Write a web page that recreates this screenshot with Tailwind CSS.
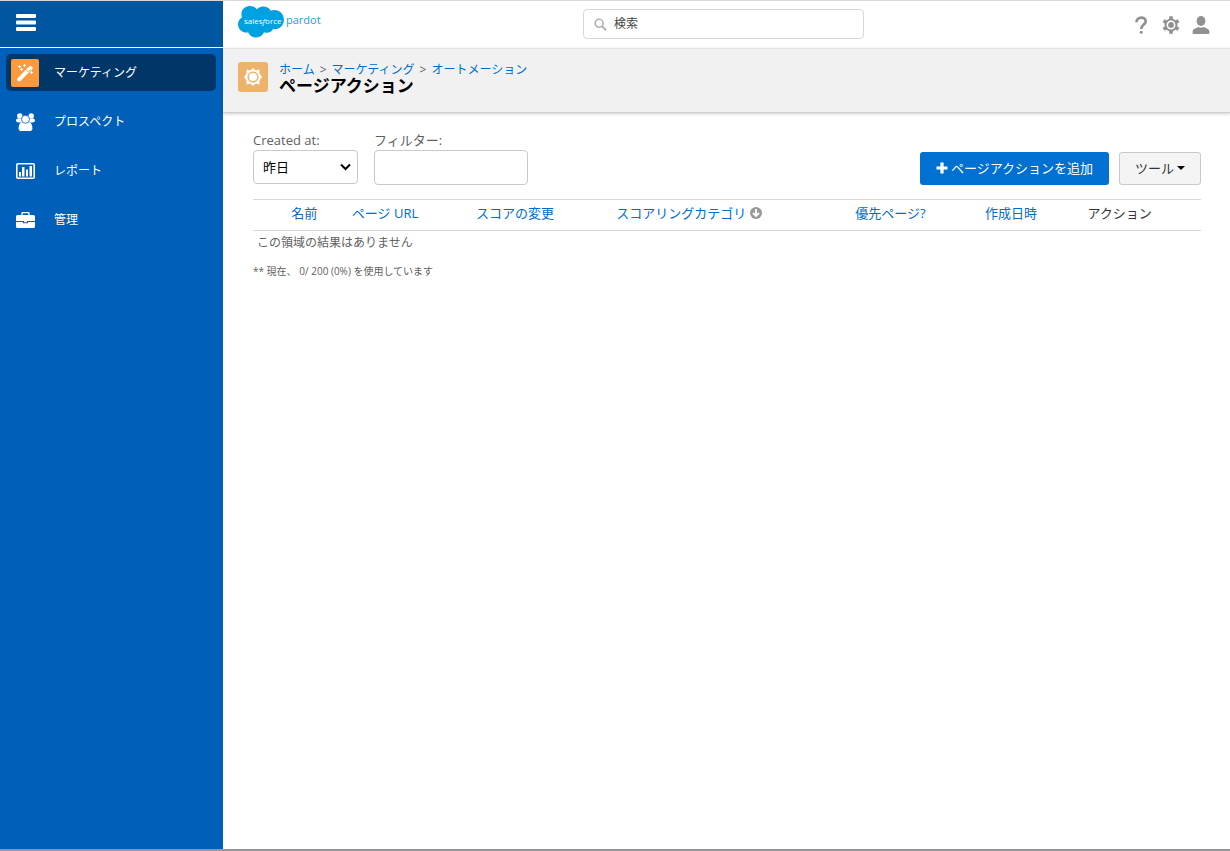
<!DOCTYPE html>
<html lang="ja">
<head>
<meta charset="utf-8">
<meta name="viewport" content="width=device-width, initial-scale=1">
<title>ページアクション</title>
<script src="https://cdn.jsdelivr.net/npm/@tailwindcss/browser@4"></script>
</head>
<body class="flex min-h-screen flex-col border-t border-[#d8d9dd] bg-white font-['Open_Sans','Noto_Sans_CJK_JP',sans-serif] text-[13px] leading-5 text-[#5f5f5f]">
<div class="flex flex-1 border-b-2 border-[#96969a]">
  <aside class="w-[223px] shrink-0 bg-[#005fb8] text-white">
    <div class="flex h-[47px] items-center border-b border-white bg-[#0056a0] pb-1 pl-4">
      <button type="button" aria-label="メニュー" class="block">
        <svg class="block h-[17px] w-5" viewBox="0 0 20 17" fill="currentColor"><rect width="20" height="4" rx="1"/><rect y="6.5" width="20" height="4" rx="1"/><rect y="13" width="20" height="4" rx="1"/></svg>
      </button>
    </div>
    <nav class="flex flex-col gap-3 px-1.5 pt-1.5 text-xs">
      <a href="#" class="flex h-[37px] w-[210px] items-center gap-[15px] rounded-[5px] bg-[#003768] pl-[5px] pr-2">
        <span class="flex size-7 items-center justify-center rounded-[2px] bg-[#ff9a3c]">
          <svg class="size-[18px]" viewBox="0 0 18 18" fill="none" stroke="white"><path d="M3.2 15.3 14.5 4" stroke-width="4" stroke-linecap="round"/><path d="m10.6 6.3 1.4 1.4 2.4-2.4" stroke="#ff9a3c" stroke-width="1"/><path d="M3.5 1v3M2 2.5h3M8.5 0v3M7 1.500h3M5.500 3.800v3M4 5.300h3M15.500 7v3M14 8.500h3" stroke-width="1"/></svg>
        </span>マーケティング</a>
      <a href="#" class="flex h-[37px] items-center gap-[19px] pl-[10px]">
        <svg class="h-[18px] w-[19px]" viewBox="0 0 19 18" fill="currentColor"><circle cx="3.8" cy="3" r="2.700"/><circle cx="15.200" cy="3" r="2.700"/><path d="M1.500 5.600h4l2 4h-5Q0 9.600 0 7.600 0 6 1.500 5.600zM17.500 5.600h-4l-2 4h5q2.500 0 2.500-2 0-1.600-1.500-2z"/><path d="M6 9h7q3.400 1.200 3.400 6.200 0 2.800-2.600 2.800H5.200q-2.600 0-2.600-2.800Q2.600 10.200 6 9z"/><circle cx="9.500" cy="6.300" r="4" stroke="#005fb8" stroke-width=".8"/></svg>
        プロスペクト</a>
      <a href="#" class="flex h-[37px] items-center gap-[19px] pl-[10px]">
        <svg class="h-4 w-[19px]" viewBox="0 0 19 16" fill="currentColor"><rect x=".8" y=".8" width="17.400" height="14.400" rx="1" fill="none" stroke="white" stroke-width="1.600"/><path d="M3 9h2v4.500H3zM6 4h2.500v9.500H6zM10 6.500h2v7h-2zM13.500 3H16v10.500h-2.500z"/></svg>
        レポート</a>
      <a href="#" class="flex h-[37px] items-center gap-[19px] pl-[10px]">
        <svg class="h-4 w-[19px]" viewBox="0 0 19 16" fill="currentColor"><path d="M6 3V1.500Q6 .5 7 .5h5q1 0 1 1V3" fill="none" stroke="white" stroke-width="1.300"/><path d="M1.500 3h16Q19 3 19 4.500V9H0V4.500Q0 3 1.500 3zM0 10h7v1.200h5V10h7v4.500q0 1.500-1.500 1.500h-16Q0 16 0 14.500z"/><path d="M8 9h3v1.300H8z"/></svg>
        管理</a>
    </nav>
  </aside>

  <div class="min-w-0 flex-1">
    <header class="relative flex h-[47px] items-center justify-between pl-[15px] pr-5">
      <a href="#" class="flex items-center gap-0.5 self-start pt-1" aria-label="salesforce pardot">
        <svg class="h-[33px] w-[84px]" viewBox="0 0 84 33"><path fill="#00a1e0" d="M19 4.200C21 2.100 23.500 1.300 26 1.600c3 .2 5.500 1.900 6.800 4.200 5.800-2.400 13.100 1.400 13.100 8.900 0 6.200-5.100 10.300-10.900 9.300-1.800 3.500-5.600 4.700-9 3.300-1.500 3.700-5 5.700-8.800 5.100-3.200-.3-5.700-2.200-6.900-5C5 28.300 0 24.500 0 19.200c0-3 1.500-5.400 3.900-6.800C1.900 6.300 6.100 1 11.500 1c3.200 0 5.800 1.200 7.500 3.200z"/><text x="6" y="19" font-family="Open Sans" font-size="8" fill="white">sales<tspan font-style="italic">f</tspan>orce</text><text x="48" y="19" font-family="Open Sans" font-size="11" fill="#159fd4">pardot</text></svg>
      </a>
      <label class="absolute left-[360px] top-2 flex h-[30px] w-[281px] items-center gap-[7px] rounded border border-[#d8d8d8] bg-white pl-2.5">
        <svg class="size-[13px] shrink-0" viewBox="0 0 14 14" fill="none" stroke="#b0b0b0" stroke-width="1.700"><circle cx="5.500" cy="5.700" r="4.300"/><path d="m8.700 8.900 4.300 4.300" stroke-width="2"/></svg>
        <input type="search" aria-label="検索" placeholder="検索" class="min-w-0 flex-1 bg-transparent text-xs outline-none placeholder:text-[#444]">
      </label>
      <div class="flex items-center gap-3 text-[#919191]">
        <button type="button" aria-label="ヘルプ"><svg class="block size-[18px]" viewBox="0 0 18 18" fill="none" stroke="currentColor" stroke-width="2.700"><path d="M4.500 6.200c0-6.300 9.500-5.900 9.200-.6C13.500 8.700 9.200 8.500 9.200 13"/><circle cx="9.200" cy="16.300" r="1.500" fill="currentColor" stroke="none"/></svg></button>
        <button type="button" aria-label="設定"><svg class="block size-[18px]" viewBox="0 0 18 18" fill="none" stroke="currentColor"><path d="M9 .3v17.400M1.500 4.700l15 8.600M1.500 13.300l15-8.600" stroke-width="3.600"/><circle cx="9" cy="9" r="6.500" fill="currentColor" stroke="none"/><circle cx="9" cy="9" r="3.700" stroke="white" stroke-width="1.500"/></svg></button>
        <button type="button" aria-label="ユーザー"><svg class="block size-[18px]" viewBox="0 0 18 18" fill="currentColor"><ellipse cx="9" cy="5" rx="4.400" ry="5"/><path d="M.5 16.500q0-3.300 3-4.300l3-1.200q2.500 1.400 5 0l3 1.200q3 1 3 4.300 0 1.500-1.500 1.500H2Q.5 18 .5 16.500z"/></svg></button>
      </div>
    </header>

    <section class="flex h-[65px] items-start gap-[11px] border-b border-t border-b-[#cfcfcf] border-t-[#e3e3e3] bg-[#f1f1f1] pl-[15px] pt-[13px] shadow-[0_1px_3px_#0003]">
      <svg class="size-[30px] shrink-0" viewBox="0 0 30 30"><rect width="30" height="30" rx="3" fill="#edb36b"/><path fill="white" d="M15 6l2.700 2.600 3.700-1 .1 3.800L24 15l-2.500 3.600-.1 3.800-3.700-1L15 24l-2.700-2.600-3.700 1-.1-3.800L6 15l2.500-3.600.1-3.800 3.700 1z"/><circle cx="15" cy="15" r="4.800" fill="white" stroke="#edb36b" stroke-width="1.500"/></svg>
      <div>
        <nav aria-label="パンくず" class="flex gap-[5px] text-xs leading-4">
          <a href="#" class="text-[#006dcc]">ホーム</a><span>&gt;</span><a href="#" class="text-[#006dcc]">マーケティング</a><span>&gt;</span><a href="#" class="text-[#006dcc]">オートメーション</a>
        </nav>
        <h1 class="text-[17px] font-bold leading-4 text-black">ページアクション</h1>
      </div>
    </section>

    <main class="pl-[30px] pr-[29px] pt-[17px]">
      <div class="flex items-end justify-between">
        <div class="flex gap-4">
          <div>
            <label for="created" class="block">Created at:</label>
            <div class="relative">
              <select id="created" class="block h-[34px] w-[105px] appearance-none rounded border border-[#c9c9c9] bg-white pl-[9px] text-black"><option>昨日</option></select>
              <svg class="pointer-events-none absolute right-[7px] top-[13px] h-2 w-[11px]" viewBox="0 0 11 8" fill="none" stroke="black" stroke-width="2"><path d="m1 1.500 4.500 4.500L10 1.500"/></svg>
            </div>
          </div>
          <div>
            <label for="filter" class="block">フィルター:</label>
            <input id="filter" type="text" class="block h-[35px] w-[154px] rounded border border-[#c9c9c9] px-2">
          </div>
        </div>
        <div class="flex gap-2.5">
          <button type="button" class="flex h-[33px] items-center gap-[3px] rounded-[3px] bg-[#0070d2] px-4 pb-0.5 text-white"><svg class="size-3" viewBox="0 0 12 12" fill="none" stroke="white" stroke-width="3.200"><path d="M6 .5v11M.5 6h11"/></svg>ページアクションを追加</button>
          <button type="button" class="flex h-[33px] items-center gap-[3px] rounded-[3px] border border-[#c9c9c9] bg-[#f4f4f4] px-[15px] pb-0.5 text-[#333]">ツール<svg class="h-1 w-2" viewBox="0 0 8 4" fill="black"><path d="M0 0h8L4 4z"/></svg></button>
        </div>
      </div>

      <table class="mt-3.5 w-full table-fixed text-left">
        <colgroup><col class="w-[3.6%]"><col class="w-[6.4%]"><col class="w-[13.1%]"><col class="w-[14.8%]"><col class="w-[25.2%]"><col class="w-[13.7%]"><col class="w-[10.8%]"><col class="w-[12.4%]"></colgroup>
        <thead>
          <tr class="h-[31px] whitespace-nowrap border-y border-[#d8d8d8] text-[#006dcc]">
            <td></td>
            <th class="px-1 pb-1 font-normal"><a href="#">名前</a></th>
            <th class="px-1 pb-1 font-normal"><a href="#">ページ URL</a></th>
            <th class="px-1 pb-1 font-normal"><a href="#">スコアの変更</a></th>
            <th class="px-1 pb-1 font-normal"><a href="#" class="flex items-center gap-1">スコアリングカテゴリ<svg class="size-3" viewBox="0 0 12 12"><circle cx="6" cy="6" r="6" fill="#999"/><path d="M6 2v6.500M3 6l3 3 3-3" fill="none" stroke="white" stroke-width="1.800"/></svg></a></th>
            <th class="px-1 pb-1 font-normal"><a href="#">優先ページ?</a></th>
            <th class="px-1 pb-1 font-normal"><a href="#">作成日時</a></th>
            <th class="px-1 pb-1 font-normal text-[#333]">アクション</th>
          </tr>
        </thead>
        <tbody><tr><td colspan="8" class="px-1 pt-0.5 text-xs leading-5">この領域の結果はありません</td></tr></tbody>
      </table>
      <p class="mt-2 text-[10px] leading-5">** 現在、 0/ 200 (0%) を使用しています</p>
    </main>
  </div>
</div>
</body>
</html>
